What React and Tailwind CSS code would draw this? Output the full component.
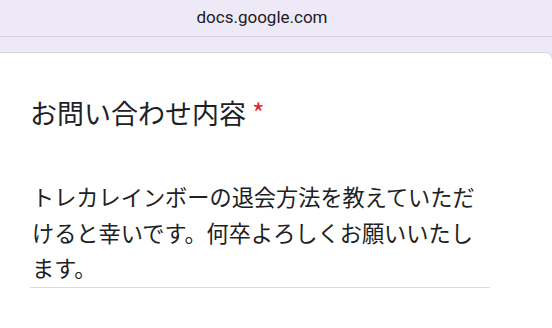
const jp = { fontFamily: '"Noto Sans CJK JP", "Noto Sans", sans-serif' };

export default function App() {
  return (
    <div className="w-[552px] h-[328px] overflow-hidden bg-[#ede9f6]">
      {/* address bar */}
      <div className="h-[37px] flex items-center justify-center pr-[28px] border-b border-[#d4d0de]">
        <span className="text-[17px] text-[#1c1b1f]" style={{ fontFamily: 'Roboto, sans-serif' }}>
          docs.google.com
        </span>
      </div>

      <div className="h-[15px]" />

      {/* form card */}
      <div
        className="-ml-[10px] w-[563px] h-[300px] bg-white border-t border-r border-[#d9d8de] rounded-tr-[8px] pl-[40px]"
        style={jp}
      >
        <div className="pt-[42px] h-[126px] text-[27px] leading-[36px] text-[#202124]">
          お問い合わせ内容 <span className="text-[#d93025]">*</span>
        </div>
        <div className="w-[460px] border-b border-[#dadce0] pb-[1px]">
          <p className="w-[458px] pl-[2px] text-[22.2px] leading-[35.5px] text-[#202124]">
            トレカレインボーの退会方法を教えていただけると幸いです。何卒よろしくお願いいたします。
          </p>
        </div>
      </div>
    </div>
  );
}
